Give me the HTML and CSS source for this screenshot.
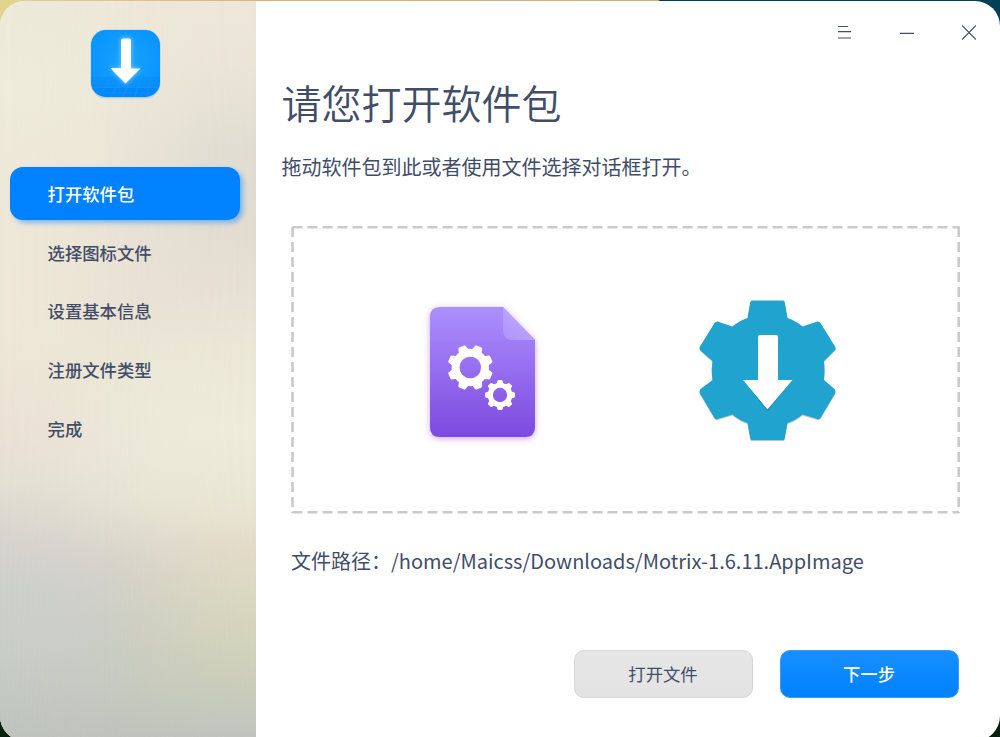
FILE: index.html
```
<!DOCTYPE html>
<html lang="zh-CN">
<head>
<meta charset="utf-8">
<title>请您打开软件包</title>
<link rel="stylesheet" href="styles.css">
</head>
<body>
<div class="window">
  <aside class="sidebar">
    <svg class="logo" width="72" height="72" viewBox="0 0 72 72">
      <defs>
        <radialGradient id="lg" cx=".5" cy=".45" r=".6"><stop offset="0" stop-color="#18a2ff"/><stop offset="1" stop-color="#0794fe"/></radialGradient>
        <filter id="glow" x="-50%" y="-50%" width="200%" height="200%"><feGaussianBlur stdDeviation="2.5"/></filter>
        <clipPath id="lc"><rect x="1" y="1" width="69" height="67" rx="15"/></clipPath>
      </defs>
      <rect x=".5" y=".5" width="70" height="69" rx="15.500" fill="#68b8f0" opacity=".45"/>
      <rect x="1" y="1" width="69" height="67" rx="15" fill="url(#lg)"/>
      <g clip-path="url(#lc)">
        <path d="M0 48H72V70H0z" fill="#007df0" opacity=".25"/>
        <path d="M0 59H72V70H0z" fill="#0078ee" opacity=".35"/>
        <path d="M0 50H72M0 54H72M0 58.500H72M0 64H72M12 46L-4 70M22 46L8 70M32 46L20 70M42 46L32 70M52 46L44 70M62 46L56 70M72 46L68 70" stroke="#1696fc" stroke-width="1" opacity=".7"/>
      </g>
      <path d="M31 9h10v30h9L35.500 55 21 39h10z" fill="#7fd0ff" filter="url(#glow)"/>
      <path d="M31 11q0-1.500 1.500-1.500h7q1.500 0 1.500 1.500V39.500h9.500L48 42 35.500 54.500 24 43l-3.500-4H31z" fill="#fff"/>
    </svg>
    <nav class="steps">
      <a class="step active">打开软件包</a>
      <a class="step">选择图标文件</a>
      <a class="step">设置基本信息</a>
      <a class="step">注册文件类型</a>
      <a class="step">完成</a>
    </nav>
  </aside>
  <main class="main">
    <div class="controls">
      <svg width="14" height="15" viewBox="0 0 14 15"><path d="M0 1.500h10M0 6.700h13M0 13h13"/></svg>
      <svg width="14" height="15" viewBox="0 0 14 15"><path d="M0 8.300h14"/></svg>
      <svg width="14" height="15" viewBox="0 0 14 15"><path d="M0 .5l14 14M14 .5l-14 14"/></svg>
    </div>
    <h1 class="title">请您打开软件包</h1>
    <p class="desc">拖动软件包到此或者使用文件选择对话框打开。</p>
    <div class="drop">
      <svg width="670" height="290" viewBox="291 225 670 290">
        <defs>
          <linearGradient id="doc" x2="0" y2="1"><stop offset="0" stop-color="#ac90fe"/><stop offset="1" stop-color="#7d49df"/></linearGradient>
          <linearGradient id="fold" x1="0" y1="1" x2=".6" y2=".3"><stop offset="0" stop-color="#ae93fa"/><stop offset="1" stop-color="#bda6fd"/></linearGradient>
          <filter id="sh" x="-20%" y="-20%" width="140%" height="140%"><feDropShadow dx="0" dy="1.500" stdDeviation="3.200" flood-color="#9a4cf0" flood-opacity=".5"/></filter>
          <g id="cog"><circle r="14.700" fill="none" stroke="#fff" stroke-width="7.800"/>
            <g id="t4"><g id="t2"><path id="t1" d="M-5.500-16l1.600-5.700q.4-1 1.300-1h5.200q.9 0 1.300 1L5.500-16z" fill="#fff"/><use href="#t1" transform="rotate(180)"/></g><use href="#t2" transform="rotate(90)"/></g><use href="#t4" transform="rotate(45)"/></g>
        </defs>
        <path class="dash" d="M292.500 227.200H959.500"/>
        <path class="dash" d="M292.500 512.200H959"/>
        <path class="dash" d="M292.500 227V513"/>
        <path class="dash" d="M958.700 227V513"/>
        <g filter="url(#sh)">
          <path d="M440 307h63l32 33v87q0 10-10 10h-85q-10 0-10-10V317q0-10 10-10z" fill="url(#doc)"/>
        </g>
        <path d="M503 307l32 33h-22q-10 0-10-10z" fill="url(#fold)"/>
        <use href="#cog" transform="translate(470.300 367.500) rotate(22.500)"/>
        <use href="#cog" transform="translate(500 395) scale(.66)"/>
        <path class="gear" d="M752 300.500h31q1.500 0 1.700 1.500L787.500 318q8 2.500 15 8.500L817.500 321.500q2 0 3 1.500L835 346.500q1.500 2.500-.5 4L824 361q1 9.500 0 19L834.500 389q1.500 2 .5 4.500L820.500 418q-1 1.500-3 1L802.500 414.500q-7 6-15 8.500L784.700 438.500q-.2 1.500-1.700 1.500h-31q-1.500 0-1.700-1.500L747.500 423q-8-2.500-15-8.500L717.500 419q-2 .5-3-1L700 393.500q-1-2.500.5-4.500L712.500 380q-1.500-9.500 0-19L700.500 350.500q-1.500-1.500-.5-4L714.500 323q1-1.500 3-1.500L732.500 326.500q7-6 15-8.500L750.300 302q.2-1.500 1.700-1.500z"/>
        <path d="M760 336h16q2 0 2 2v42h14.500L767.500 411 743 380h15v-42q0-2 2-2z" fill="#16728f" opacity=".8"/>
        <path d="M760 335h16q2 0 2 2v43h14.500L767.500 409.500 743 380h15v-43q0-2 2-2z" fill="#fff"/>
      </svg>
    </div>
    <p class="path">文件路径：/home/Maicss/Downloads/Motrix-1.6.11.AppImage</p>
    <div class="actions">
      <button class="btn">打开文件</button>
      <button class="btn primary">下一步</button>
    </div>
  </main>
</div>
</body>
</html>
```
FILE: styles.css
```
* { box-sizing: border-box; }
body {
  margin: 0; width: 1000px; height: 737px; overflow: hidden;
  padding-top: 1px;
  font-family: "Noto Sans CJK SC", sans-serif;
  color: #414d68;
  background:
    linear-gradient(90deg, #e2d48f, #d9b477 260px, #cfae78 658px, #003f58 660px) 0 0 / 100% 40px no-repeat,
    #06200f;
}
.window {
  display: flex; width: 1000px; height: 740px;
  border-radius: 25px; overflow: hidden; background: #fff;
}
.sidebar {
  width: 256px; padding: 28px 10px 0; flex: none;
  display: flex; flex-direction: column;
  position: relative; isolation: isolate;
  background: linear-gradient(#efe8d9 0, #ede8d9 100px, #eae3d6 200px, #eae2d5 300px, #ecead9 400px, #ece9da 450px, #e8e5d5 500px, #d8d5cb 560px, #cecfc5 620px, #c8cbc0 680px, #c0c4bc 736px);
}
/* Left and right tints fade into the centre column of the sidebar */
.sidebar::before, .sidebar::after {
  content: ""; position: absolute; inset: 0; z-index: -1;
}
.sidebar::before {
  background: linear-gradient(#ebe9d8 0, #eeebda 90px, #ede7d7 200px, #eee7d7 330px, #eae0d4 440px, #e3dfd3 480px, #d6d3cd 540px, #cdcfca 590px, #c9cdc7 650px, #bfc3bd 736px);
  mask-image: linear-gradient(90deg, #000, rgba(0,0,0,.8) 20%, rgba(0,0,0,.2) 45%, transparent 60%);
}
.sidebar::after {
  background: linear-gradient(#ede6d8 0, #ebe4d7 60px, #dfdcd1 150px, #e2dbd0 230px, #e7dfd4 290px, #ebe7d7 350px, #eeebdb 430px, #e9e5d3 500px, #e3dac8 550px, #dad8c1 590px, #d2d3bb 640px, #c9ccba 690px, #c0c4bd 736px);
  mask-image: linear-gradient(270deg, #000, rgba(0,0,0,.8) 20%, rgba(0,0,0,.2) 45%, transparent 60%);
}
.logo { margin-left: 79.500px; }
.steps { display: flex; flex-direction: column; margin-top: 66px; gap: 6.200px; }
.step {
  height: 52.500px; width: 230px; padding-left: 37.600px; border-radius: 13px;
  font-size: 17.330px; font-weight: 500; line-height: 54px;
}
.active { background: #0081ff; color: #fff; box-shadow: 3px 3px 5px rgba(0,129,255,.45); }
.main { flex: 1; padding-left: 25.500px; }
.controls { display: flex; gap: 48px; padding: 24px 0 0 556px; height: 67px; }
.controls svg { fill: none; stroke: #414d68; stroke-width: 1.200; }
.title { margin: 0; font-size: 40px; line-height: 68px; font-weight: 350; }
.desc { margin: 15px 0 0; font-size: 20px; line-height: 32px; }
.drop { margin: 42px 0 0 9.500px; height: 290px; }
.drop svg { display: block; }
.dash { stroke: #cacaca; stroke-width: 2.600; stroke-dasharray: 10 5; fill: none; }
.gear { fill: #21a3cf; filter: drop-shadow(0 1.500px .3px #bfc3c5); }
.path { margin: 30px 0 0 9.500px; font-size: 20px; line-height: 32px; }
.actions { display: flex; gap: 27px; margin: 73px 0 0 292px; }
.btn {
  width: 179px; height: 48px; padding: 0; border: 1px solid #d6d6d6; border-radius: 10px;
  background: linear-gradient(#e6e6e6, #e3e3e3); color: #414d68;
  font: 400 17.330px/46px "Noto Sans CJK SC", sans-serif;
}
.primary { border-color: #3a9bff; background: linear-gradient(#188fff, #0081ff) border-box; color: #fff; font-weight: 500; }
```
